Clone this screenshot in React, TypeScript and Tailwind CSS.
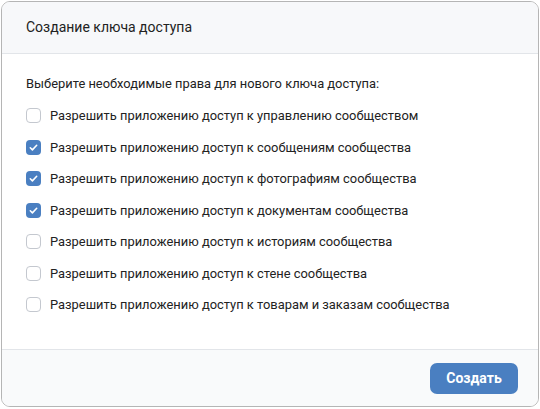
import React from "react";

const items: { label: string; checked: boolean }[] = [
  { label: "Разрешить приложению доступ к управлению сообществом", checked: false },
  { label: "Разрешить приложению доступ к сообщениям сообщества", checked: true },
  { label: "Разрешить приложению доступ к фотографиям сообщества", checked: true },
  { label: "Разрешить приложению доступ к документам сообщества", checked: true },
  { label: "Разрешить приложению доступ к историям сообщества", checked: false },
  { label: "Разрешить приложению доступ к стене сообщества", checked: false },
  { label: "Разрешить приложению доступ к товарам и заказам сообщества", checked: false },
];

function Box({ checked }: { checked: boolean }) {
  if (checked) {
    return (
      <span className="w-[15px] h-[15px] rounded-[4px] bg-[#4a7fc1] flex items-center justify-center shrink-0">
        <svg width="11" height="11" viewBox="0 0 12 12" fill="none">
          <path d="M2.5 6.3l2.3 2.3 4.7-5" stroke="white" strokeWidth="1.7" strokeLinecap="round" strokeLinejoin="round" />
        </svg>
      </span>
    );
  }
  return <span className="w-[15px] h-[15px] rounded-[4px] border-[1.5px] border-[#c4c8cf] bg-white shrink-0" />;
}

export default function App() {
  return (
    <div className="w-[540px] h-[409px] bg-white p-px" style={{ fontFamily: "Roboto, 'Noto Sans', sans-serif" }}>
      <div className="h-[406px] w-[538px] border border-[#b5b5b5] rounded-[9px] overflow-hidden flex flex-col bg-white">
        <div className="h-[52px] shrink-0 bg-[#f7f8fa] border-b border-[#e2e5e9] flex items-center pl-[24px] pb-[1px] text-[14px] text-[#222222]">
          Создание ключа доступа
        </div>
        <div className="flex-1 pt-[21px] pl-[24px] text-[12.9px] text-[#222222]">
          <div className="h-[18px] leading-[18px] mb-[7px]">Выберите необходимые права для нового ключа доступа:</div>
          {items.map((it) => (
            <div key={it.label} className="h-[31.5px] flex items-center gap-[9px]">
              <Box checked={it.checked} />
              <span>{it.label}</span>
            </div>
          ))}
        </div>
        <div className="h-[57px] shrink-0 bg-[#f9fafb] border-t border-[#e2e5e9] flex items-center justify-end pr-[20px]">
          <button className="w-[88px] h-[31px] rounded-[7px] bg-[#4a7fc1] text-white text-[14px] font-bold">
            Создать
          </button>
        </div>
      </div>
    </div>
  );
}
